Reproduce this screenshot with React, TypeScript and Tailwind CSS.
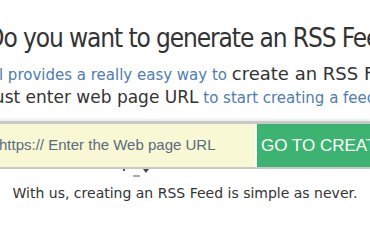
import React from 'react';

export default function App() {
  return (
    <div className="relative w-[370px] h-[212px] overflow-hidden bg-white">
      <div className="flex flex-col items-center pt-[23px]">
        {/* heading */}
        <h1
          className="ml-[21px] whitespace-nowrap text-[26px] leading-[30px] text-[#333] tracking-[-1.1px]"
          style={{ fontFamily: '"DejaVu Sans Condensed", "DejaVu Sans", sans-serif' }}
        >
          Do you want to generate an RSS Feed?
        </h1>

        {/* intro */}
        <div
          className="mt-[10px] flex flex-col items-center whitespace-nowrap text-[15px] leading-[22px] text-[#4f7db0]"
          style={{ fontFamily: '"DejaVu Sans", Verdana, sans-serif' }}
        >
          <p className="mr-[15px]">
            Our tool provides a really easy way to{' '}
            <span className="text-[18px] text-[#333]">create an RSS Feed.</span>
          </p>
          <p>
            <span className="text-[17px] text-[#333]">Just enter web page URL</span> to start creating a feed.
          </p>
        </div>
      </div>

      {/* form */}
      <div className="mt-[12px] flex h-[48px] border-t-[3px] border-b-2 border-[#c8c8c8] shadow-[0_-2px_2px_rgba(0,0,0,0.08)]">
        <div className="flex w-[255px] shrink-0 items-center bg-[#f8f8d4]">
          <span
            className="-ml-[1px] whitespace-nowrap text-[15px] text-[#5b6b82]"
            style={{ fontFamily: '"Liberation Sans", Arial, sans-serif' }}
          >
            https:// Enter the Web page URL
          </span>
        </div>
        <div className="ml-[2px] flex flex-1 items-center bg-[#3cb371] pl-[4px]">
          <span
            className="whitespace-nowrap text-[17px] uppercase text-white"
            style={{ fontFamily: '"Liberation Sans", Arial, sans-serif' }}
          >
            Go to create
          </span>
        </div>
      </div>

      {/* little carousel marks */}
      <div className="relative h-[10px]">
        <span className="absolute left-[123px] top-[0px] h-[2px] w-[2px] bg-[#556]" />
        <span className="absolute left-[133px] top-[6px] h-[2px] w-[7px] bg-[#aaa]" />
        <span className="absolute left-[143px] top-[0px] h-0 w-0 border-l-[3px] border-r-[3px] border-t-[4px] border-l-transparent border-r-transparent border-t-[#445]" />
      </div>

      <p
        className="mt-[4px] text-center whitespace-nowrap text-[14px] text-[#333]"
        style={{ fontFamily: '"DejaVu Sans", Verdana, sans-serif' }}
      >
        With us, creating an RSS Feed is simple as never.
      </p>
    </div>
  );
}
